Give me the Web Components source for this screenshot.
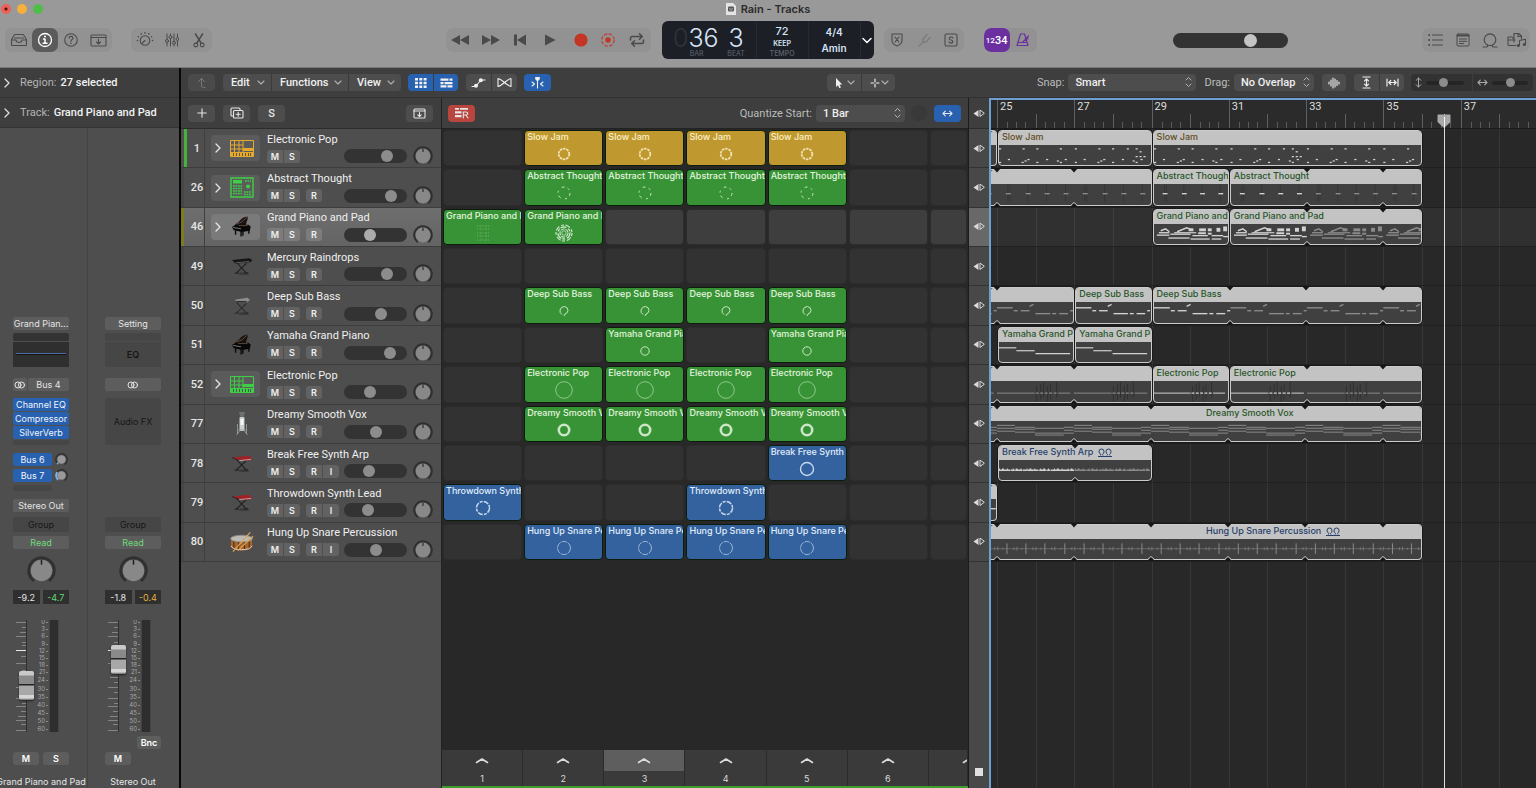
<!DOCTYPE html>
<html lang="en">
<head>
<meta charset="utf-8">
<title>Rain - Tracks</title>
<style>
  html, body { margin: 0; height: 100%; }
  body { background: #282828; font-family: Inter, "Liberation Sans", sans-serif; color: #e6e6e6; overflow: hidden; --ui: Roboto, "Liberation Sans", sans-serif; }
</style>
</head>
<body>
<daw-window></daw-window>
<script>
const RESET = `
  *, *::before, *::after { box-sizing: border-box; }
  button, input, select { font: inherit; color: inherit; margin: 0; padding: 0; border: 0; background: none; outline: 0; }
  button { display: flex; align-items: center; justify-content: center; }
  svg { display: block; flex: none; }
`;
function define(name, css, render) {
  customElements.define(name, class extends HTMLElement {
    connectedCallback() {
      if (this.shadowRoot) return;
      const root = this.attachShadow({ mode: 'open' });
      root.innerHTML = `<style>${RESET}${css}</style>${render(this)}`;
    }
  });
}

/* ---------- icons ---------- */
const s = (w, h, body, sw = 1.2) => `<svg width="${w}" height="${h}" viewBox="0 0 ${w} ${h}" fill="none" stroke="currentColor" stroke-width="${sw}" stroke-linecap="round" stroke-linejoin="round" aria-hidden="true">${body}</svg>`;
const F = 'fill="currentColor" stroke="none"';
const rays = (cx, cy, r, n, from, step) => Array.from({ length: n }, (_, i) => {
  const a = (from + i * step) * Math.PI / 180;
  return `<circle cx="${(cx + r * Math.cos(a)).toFixed(1)}" cy="${(cy + r * Math.sin(a)).toFixed(1)}" r=".8" ${F}/>`;
}).join('');
const ICONS = {
  library: s(18, 14, '<path d="M1.5 6.5 4 2.5Q4.5 1.5 5.5 1.5h7q1 0 1.5 1l2.500 4v5q0 1-1 1h-13q-1 0-1-1zM1.500 7H6q.3 2.500 3 2.500T12 7h4.500M4.500 5h9"/>', 1.1),
  info: s(16, 16, '<circle cx="8" cy="8" r="6.500"/><path d="M6.500 7H8v4M6 11.300h4" stroke-width="1.500"/><circle cx="8" cy="4.500" r="1" fill="currentColor" stroke="none"/>', 1.3),
  help: s(16, 16, '<circle cx="8" cy="8" r="6.300"/><path d="M6 6.300q.1-1.900 2-1.900t2 1.700q0 1-1.200 1.700Q8 8.300 8 9.200"/><circle cx="8" cy="11.300" r=".8" fill="currentColor" stroke="none"/>', 1.1),
  boxdown: s(17, 13, '<rect x="1" y="1" width="15" height="11" rx="1"/><path d="M1 3.500h15M8.500 5.200v4.600M6.500 8l2 2 2-2"/>', 1.1),
  tray: s(13, 11, '<rect x="1" y="1" width="11" height="9" rx="1"/><path d="M1 3h11M6.500 4.500v3.800M4.800 6.800l1.700 1.700 1.700-1.700"/>', 1.1),
  dial: s(18, 16, `<circle cx="9" cy="8.500" r="4.800"/><path d="M9 8.500 6.300 11"/>${rays(9, 8.5, 7.6, 7, 180, 30)}`, 1.1),
  mixer: s(14, 14, '<path d="M2 1v5M2 10v3M5.500 1v1.500M5.500 6v7M9 1v7M9 11.500v1.500M12.500 1v3M12.500 8v5" /><circle cx="2" cy="8" r="1.500"/><circle cx="5.500" cy="4.200" r="1.500"/><circle cx="9" cy="9.700" r="1.500"/><circle cx="12.500" cy="6" r="1.500"/>', 1),
  scissors: s(12, 15, '<path d="M2.500 1 8.300 10.300M9.500 1 3.700 10.300" stroke-width="1.500"/><circle cx="2.800" cy="12" r="1.900"/><circle cx="9.200" cy="12" r="1.900"/>', 1.1),
  rew: s(20, 12, `<path d="M10 1v10L1 6zM19 1v10l-9-5z" ${F}/>`),
  fwd: s(20, 12, `<path d="M10 1v10l9-5zM1 1v10l9-5z" ${F}/>`),
  start: s(14, 12, `<path d="M1 .5h3v11H1zM13 .5v11L4 6z" ${F}/>`),
  play: s(12, 12, `<path d="M1 0.500v11l10.500-5.500z" ${F}/>`),
  record: s(14, 14, '<circle cx="7" cy="7" r="6.600" fill="#c43524" stroke="none"/>'),
  capture: s(14, 14, '<circle cx="7" cy="7" r="6.200" stroke="#bf3a2c" stroke-dasharray="3.300 1.570" stroke-linecap="butt"/><circle cx="7" cy="7" r="2.700" fill="#c43524" stroke="none"/>'),
  cycle: s(16, 14, '<path d="M1.500 7V5.500q0-2 2-2H13M10.500.8 13.300 3.500 10.500 6.200M14.500 7v1.500q0 2-2 2H3M5.500 7.800 2.700 10.500l2.800 2.700"/>', 1.5),
  shield: s(12, 14, '<path d="M1 1h10v7q0 3-5 5-5-2-5-5zM4 4l4 5M8 4 4 9"/>', 1.1),
  tuner: s(13, 14, '<path d="M1 13 5.500 8.500M5.500 8.500Q4 7 5.500 5.500L9 1.500M5.500 8.500Q7 10 8.500 8.500L12 4.500"/>', 1.4),
  solo: s(14, 14, '<rect x="1" y="1" width="12" height="12" rx="1.500"/><path d="M9 5Q8.500 4 7 4 5.200 4 5.200 5.400 5.200 6.600 7 7q1.900.4 1.900 1.700T7 10.100Q5.300 10.100 5 8.900"/>', 1.1),
  metronome: s(14, 14, '<path d="M4.500 1h4L12 12.500H1zM2 9.500h9M6.500 9.500 12.500 3M9.500 5l2.500 1"/>', 1.2),
  list: s(15, 14, `<path d="M4.500 2h10M4.500 7h10M4.500 12h10"/><circle cx="1.200" cy="2" r="1" ${F}/><circle cx="1.200" cy="7" r="1" ${F}/><circle cx="1.200" cy="12" r="1" ${F}/>`, 1.1),
  note: s(14, 14, '<rect x="1" y="1" width="12" height="12" rx="1"/><path d="M1.500 2.500h11" stroke-width="2"/><path d="M3.500 6h7M3.500 8.300h7M3.500 10.500h4"/>', 1),
  loop: s(16, 15, '<circle cx="8" cy="6.700" r="5.800"/><path d="M1 14h3.500q1.500 0 1-1.800M15 14h-3.500q-1.500 0-1-1.800"/>', 1.2),
  media: s(20, 16, `<path d="M9 13.500H2q-1 0-1-1V5h4l1 1.500M1 8h7M7 10V1.500h4.500L14.500 4v3M11 1.500V4.500h3.500"/><path d="M12.500 13.500V8.500l6-1.200v5"/><circle cx="11.300" cy="13.500" r="1.500" ${F}/><circle cx="17.300" cy="12.500" r="1.500" ${F}/>`, 1.1),
  up: s(9, 12, '<path d="M4.500 9V1.500M1.500 4.500l3-3 3 3M4.500 9q0 1.500 2 1.500H8"/>', 1),
  chev: s(8, 5, '<path d="M1 1l3 3 3-3"/>', 1.1),
  lcdchev: s(10, 7, '<path d="M1 1.500l4 4 4-4"/>', 1.5),
  gridi: s(12, 12, `<path d="M0 1h3v2.500H0zM4.300 1h3v2.500h-3zM8.600 1h3v2.500h-3zM0 4.700h3v2.500H0zM4.300 4.700h3v2.500h-3zM8.600 4.700h3v2.500h-3zM0 8.400h3v2.500H0zM4.300 8.400h3v2.500h-3zM8.600 8.400h3v2.500h-3z" ${F}/>`),
  bricks: s(13, 12, `<path d="M0.500 1.500h8v2.300h-8zM9.500 1.500h3v2.300h-3zM0.500 4.900h3v2.300h-3zM4.500 4.900h8v2.300h-8zM0.500 8.300h6v2.300h-6zM7.500 8.300h5v2.300h-5z" ${F}/>`),
  auto: s(15, 12, `<path d="M1 9.500h3.500L10 3h4"/><circle cx="5" cy="8.800" r="2" ${F}/><circle cx="9.800" cy="3.200" r="2" ${F}/>`, 1.1),
  flex: s(15, 11, '<path d="M1 1.500v8q2.500-.5 6.500-4-4-3.500-6.500-4zM14 1.500v8q-2.500-.5-6.500-4 4-3.500 6.500-4z"/>', 1.1),
  catchp: s(13, 13, `<path d="M4.200 1h4.600v2.300L6.500 5.500 4.200 3.300z" ${F}/><path d="M6.500 4v8M1 6l2.500 2L1 10M12 6 9.500 8l2.500 2"/>`, 1.1),
  pointer: s(8, 12, `<path d="M1 1v9l2-1.800 1.300 3 1.600-.7L4.600 7.600H7.300z" ${F}/>`),
  marquee: s(10, 10, '<path d="M5 1v2.700M5 6.300V9M1 5h2.700M6.300 5H9"/>', 1.2),
  updown: s(7, 12, '<path d="M1 4l2.500-2.500L6 4M1 8l2.500 2.500L6 8"/>', 1),
  wave: s(12, 12, '<path d="M1 5v2M3 3v6M5 1v10M7 2v8M9 3.500v5M11 5v2"/>', 1.1),
  vzoom: s(9, 13, '<path d="M1 1h7M1 12h7M4.500 3v7M2.500 4.800l2-2 2 2M2.500 8.200l2 2 2-2"/>', 1.2),
  hzoom: s(13, 9, '<path d="M1 1v7M12 1v7M3 4.500h7M4.800 2.500l-2 2 2 2M8.200 2.500l2 2-2 2"/>', 1.2),
  varrow: s(7, 11, '<path d="M3.500 1v9M1.200 3.300 3.500 1l2.300 2.300M1.200 7.700 3.500 10l2.300-2.300"/>', 1),
  harrow: s(11, 7, '<path d="M1 3.500h9M3.300 1.200 1 3.500l2.300 2.300M7.700 1.200 10 3.500 7.700 5.800"/>', 1.1),
  plus: s(10, 10, '<path d="M5 .8v8.400M.8 5h8.400"/>', 1.1),
  dup: s(14, 12, '<path d="M3 9H2Q1 9 1 8V2q0-1 1-1h7q1 0 1 1v1"/><rect x="3.500" y="3.500" width="9.500" height="7.500" rx="1"/><path d="M8.200 5.200v4M6.200 7.200h4"/>', 1.1),
  recenable: s(14, 12, `<path d="M0 1h4v1.800H0zM5 1h8v1.800H5zM0 4.200h6.500v2.300H0zM0 8h6.500v2.300H0z" ${F}/><path d="M8.300 11V5H11q1.700 0 1.700 1.500T11 8H8.300M10.800 8l2.200 3" />`, 1.1),
  scene: s(14, 7, '<path d="M1.500 5.500 7 2l5.500 3.500"/>', 1.6),
  cellarrows: s(12, 9, `<path d="M5.500 1v7L.5 4.500z" ${F}/><path d="M7 1.500v6l4-3z"/>`, 1),
  chevr: s(6, 10, '<path d="M1 1l4 4-4 4"/>', 1.3),
  stereo: s(12, 8, '<circle cx="4" cy="4" r="3"/><circle cx="7.500" cy="4" r="3"/>', 1),
  doc: '<svg width="10" height="12" viewBox="0 0 10 12" aria-hidden="true"><path d="M0 0h7l3 3v9H0z" fill="#e4e4e4"/><rect x="2" y="3.500" width="6" height="5" rx="1" fill="#555"/><path d="M3.300 5.500h1M5.700 5.500h1M3.500 7h3" stroke="#ddd" stroke-width=".7"/></svg>',
};

/* ---------- instrument pictures ---------- */
const synthRack = c => `<svg width="24" height="17" viewBox="0 0 24 17"><path d="M.5.5h23v16H.5z" fill="none" stroke="${c}"/><path d="M1 5h12M1 9h12M4.500 1v11M9 1v11M13 1v11" stroke="${c}"/><path d="M13 8h10v3H13zM1 12h22v4H1z" fill="${c}"/><path d="M3.500 13v3M6.500 13v3M9.500 13v3M12.500 13v3M15.500 13v3M18.500 13v3M20.500 13v3" stroke="#444" stroke-width=".8"/></svg>`;
const stand = (top, leg) => `<svg width="22" height="20" viewBox="0 0 24 22"><ellipse cx="14" cy="19.500" rx="6" ry="1.500" fill="#000" opacity=".25"/><path d="M6 7 16.500 18.500M17 8 6 18.500M4 18.800h4M14.500 18.500h4" stroke="${leg}" stroke-width="1.300" fill="none"/>${top}</svg>`;
const PICS = {
  rackY: synthRack('#e5a92e'),
  rackG: synthRack('#3fcf46'),
  drumG: '<svg width="24" height="21" viewBox="0 0 24 21"><path d="M1 1h22v19H1z" fill="none" stroke="#3fcf46" stroke-width="1.400"/><path d="M3 3h9v3.500H3z" fill="#3fcf46"/><path d="M3 9h9M3 11.500h9M3 14h9M3 16.500h9M14 15h7M14 17.500h7M15 4h6" stroke="#3fcf46" stroke-width="1.500" stroke-dasharray="1.800 .7"/><circle cx="18" cy="9.500" r="2" fill="#3fcf46"/></svg>',
  piano: '<svg width="22" height="23" viewBox="0 0 24 24"><path d="M4 10Q9 7 11 4q3-3 7-3 1 3-1 6l-1 4z" fill="#191310"/><path d="M6 9.500Q12 8 17.500 2" stroke="#80614d" fill="none" stroke-width=".8"/><path d="M1 12.500 5 10h14l2.500 2-1 4.500L12 18l-9-2z" fill="#080808"/><path d="M2 13l9 1.500" stroke="#999" stroke-width=".8"/><path d="M5 16v5M11 17v6M13 17v5M19.500 15v5" stroke="#0a0a0a" stroke-width="1.500"/><path d="M8 11h10" stroke="#7a5d4a" stroke-width=".8"/></svg>',
  synthDark: stand('<path d="M1 4.500 20 2.500l3.500 2L21 7 5 8.500z" fill="#151515"/><path d="M5 7.500 20 6" stroke="#888" stroke-width=".7"/>', '#242424'),
  synthGrey: stand('<path d="M4 4 18 2l3 2.500L17 7 6 6z" fill="#8c908e"/><path d="M6 6h11" stroke="#222"/>', '#30302f'),
  synthRed: stand('<path d="M1 5 20 3l3 3-2 2.500L9 8z" fill="#a02226"/><path d="M8 8.500 22 7" stroke="#ccc" stroke-width=".8"/><path d="M1 5l8 3.500" stroke="#222"/>', '#222'),
  mic: '<svg width="14" height="26" viewBox="0 0 14 26"><path d="M4 1h6L8.500 6h-3z" fill="#6b7171"/><rect x="4.500" y="6" width="5" height="14" rx="1" fill="#c9d2d1"/><path d="M5.500 8h3v6h-3z" fill="#f5f8f7"/><path d="M2.500 13v10M11.500 13v10M2.500 19h9M4.500 20l-3 4M9.500 20l3 4" stroke="#9aa4a3" stroke-width=".8"/></svg>',
  snare: '<svg width="25" height="22" viewBox="0 0 26 22"><path d="M1 7h22v9q-2 4-11 4T1 16z" fill="#a8652c"/><path d="M4 10v8M9 11v8M15 11v8M20 10v8" stroke="#4b2d15" stroke-width="1.100"/><ellipse cx="12" cy="7.500" rx="11.300" ry="3.500" fill="#bcbab5" stroke="#8d8a84"/><path d="M1 15q2 4 11 4t11-4" stroke="#ddd6c8" fill="none"/><path d="M3 21 21 1M8 20 24 5" stroke="#dba658" stroke-width="1.200"/></svg>',
};

/* ---------- data ---------- */
const TRACKS = [
  { n: 1, name: 'Electronic Pop', pic: 'rackY', folder: 1, btn: 'MS', vol: 74 },
  { n: 26, name: 'Abstract Thought', pic: 'drumG', folder: 1, btn: 'MSR', vol: 83 },
  { n: 46, name: 'Grand Piano and Pad', pic: 'piano', folder: 1, btn: 'MSR', vol: 39, sel: 1 },
  { n: 49, name: 'Mercury Raindrops', pic: 'synthDark', btn: 'MSR', vol: 74 },
  { n: 50, name: 'Deep Sub Bass', pic: 'synthGrey', btn: 'MSR', vol: 61 },
  { n: 51, name: 'Yamaha Grand Piano', pic: 'piano', btn: 'MSR', vol: 81 },
  { n: 52, name: 'Electronic Pop', pic: 'rackG', folder: 1, btn: 'MSR', vol: 38 },
  { n: 77, name: 'Dreamy Smooth Vox', pic: 'mic', btn: 'MSR', vol: 50 },
  { n: 78, name: 'Break Free Synth Arp', pic: 'synthRed', btn: 'MSRI', vol: 37 },
  { n: 79, name: 'Throwdown Synth Lead', pic: 'synthRed', btn: 'MSRI', vol: 33 },
  { n: 80, name: 'Hung Up Snare Percussion', pic: 'snare', btn: 'MSRI', vol: 52 },
];
const LOOPS = [
  { cols: [2, 3, 4, 5], name: 'Slow Jam', c: 'y', ring: 'beads' },
  { cols: [2, 3, 4, 5], name: 'Abstract Thought', c: 'g', ring: 'ticks' },
  { cols: [1, 2], name: 'Grand Piano and Pad', c: 'g', ring: 'swirl' },
  { cols: [] },
  { cols: [2, 3, 4, 5], name: 'Deep Sub Bass', c: 'g', ring: 'drop' },
  { cols: [3, 5], name: 'Yamaha Grand Piano', c: 'g', ring: 'small' },
  { cols: [2, 3, 4, 5], name: 'Electronic Pop', c: 'g', ring: 'large' },
  { cols: [2, 3, 4, 5], name: 'Dreamy Smooth Vox', c: 'g', ring: 'thick' },
  { cols: [5], name: 'Break Free Synth Arp', c: 'b', ring: 'solid' },
  { cols: [1, 4], name: 'Throwdown Synth Lead', c: 'b', ring: 'dashed' },
  { cols: [2, 3, 4, 5], name: 'Hung Up Snare Percussion', c: 'b', ring: 'fine' },
];
/* regions: from / to are bar numbers; 24 stands for the part scrolled off to the left */
const REGIONS = [
  [{ from: 24, to: 25, p: 'dots' }, { from: 25, to: 29, name: 'Slow Jam', c: 'y', p: 'dots', bright: 4 }, { from: 29, to: 36, name: 'Slow Jam', c: 'y', p: 'dots', bright: 8 }],
  [{ from: 24, to: 29, p: 'hits', notch: [25, 27] }, { from: 29, to: 31, name: 'Abstract Thought', c: 'g', p: 'hits', bright: 2 }, { from: 31, to: 36, name: 'Abstract Thought', c: 'g', p: 'hits', bright: 2, notch: [33, 35] }],
  [{ from: 29, to: 31, name: 'Grand Piano and Pad', c: 'g', p: 'piano', bright: 2 }, { from: 31, to: 36, name: 'Grand Piano and Pad', c: 'g', p: 'piano', bright: 2, notch: [33, 35] }],
  [],
  [{ from: 24, to: 27, p: 'bass', notch: [25] }, { from: 27, to: 29, name: 'Deep Sub Bass', c: 'g', p: 'bass', bright: 2 }, { from: 29, to: 36, name: 'Deep Sub Bass', c: 'g', p: 'bass', bright: 2, notch: [31, 33, 35] }],
  [{ from: 25, to: 27, name: 'Yamaha Grand Piano', c: 'g', p: 'steps', bright: 2 }, { from: 27, to: 29, name: 'Yamaha Grand Piano', c: 'g', p: 'steps', bright: 2 }],
  [{ from: 24, to: 29, p: 'pop', notch: [25, 27] }, { from: 29, to: 31, name: 'Electronic Pop', c: 'g', p: 'pop', bright: 2 }, { from: 31, to: 36, name: 'Electronic Pop', c: 'g', p: 'pop', bright: 2, notch: [33, 35] }],
  [{ from: 24, to: 36, name: 'Dreamy Smooth Vox', c: 'g', p: 'chords', mid: 1, notch: [25, 27, 29, 31, 33, 35] }],
  [{ from: 25, to: 29, name: 'Break Free Synth Arp', c: 'b', p: 'noise', bright: 2, st: 1, notch: [27] }],
  [{ from: 24, to: 25, p: 'line', bright: 2 }],
  [{ from: 24, to: 36, name: 'Hung Up Snare Percussion', c: 'b', p: 'spikes', mid: 1, st: 1, notch: [25, 27, 29, 31, 33, 35] }],
];

const RINGS = (() => {
  const r = (rad, w, dash, o = 1) => `<circle cx="12" cy="12" r="${rad}" stroke-width="${w}" opacity="${o}" ${dash ? `stroke-dasharray="${dash}"` : ''}/>`;
  return {
    beads: r(5.3, 1.8, '2.5 .85'), ticks: r(6, 1, '3 3.200 2 4.367'),
    swirl: r(8, 1.2, '3 1.500 5 2') + r(6, 1.3, '6 2 3 1') + r(4, 1.2, '4 1') + r(2.2, .8),
    drop: '<path d="M10 15.500Q7.500 14 8 11q1-3.500 4.500-3.500 3.500.5 3.500 4-.5 3-3 3.500l-1 2"/>',
    small: r(4.2, 1), large: r(8.3, 1, '', .6), thick: r(5.2, 2.6), solid: r(6.5, 1.4),
    dashed: r(6.5, 1.5, '5 1 3 1.200'), fine: r(6.5, 1, '6 .8', .7),
    faint: '<path d="M6 5h13M6 8h13M6 12h13M6 15h13M6 19h13" stroke-dasharray="1 1.500 2 1" opacity=".35"/>',
  };
})();

/* ---------- note drawings inside regions ---------- */
const BAR = 38.64;
function pattern(kind, lead, bars, bright) {
  const P = BAR * 2, total = lead + bars * BAR;
  const H = (x1, x2, y, w = 1.4) => `<path d="M${x1} ${y}H${x2}" stroke-width="${w}"/>`;
  const dot = (x, y) => H(x - 1, x + 1.2, y, 1.3);
  const one = {
    dots: i => [25, 39, 63, 1].map(x => dot(x, 4)).join('') + [10, 30, 49, 68].map(x => dot(x, 15)).join('') + [24, 39, 63, 1, 27, 60].map((x, k) => dot(x, k > 3 ? 16.5 : 18)).join('') + (i % 4 === 1 ? dot(54, 4) + dot(67, 7) + dot(67, 12) + dot(71, 12) + dot(63, 12) : ''),
    hits: () => [9, 29, 48, 67].map((x, k) => `<path d="M${x + 2} 1v17${k ? '' : `M${x + 4} 1v17`}" stroke="#333" stroke-width=".8"/>` + H(x, x + 5, 10)).join(''),
    piano: () => H(5, 16, 9) + H(3, 16, 11.5) + H(17, 38, 10.500) + H(15, 37, 14.500) + H(21, 44, 9, 1.2) + '<path d="M7 7l5-2 4 3M24 8l10-4 6 2" stroke-width="1.500"/>' + H(36, 41, 6, 3) + H(47, 54, 6, 3) + H(56, 60, 6, 3) + H(65, 69, 6, 4) + H(72, 76, 5, 5) + H(46, 54, 9.500, 2) + H(56, 60, 10, 2) + H(40, 56, 12) + H(60, 72, 12) + H(38, 58, 15.500) + H(60, 70, 15.500) + H(72, 77, 13),
    bass: () => H(0, 16, 6) + H(17, 21, 9) + H(24, 33, 9) + '<path d="M33 4.500l4-2" stroke-width="1.400"/>' + H(39, 54, 12) + H(56, 60, 12) + H(63, 72, 12) + H(74, 77, 9),
    steps: () => H(0, 18, 6, 1.2) + H(18, 37, 9, 1.2) + H(38, 74, 12, 1.2),
    pop: () => [40, 44, 47, 51, 54, 60].map((x, k) => `<path d="M${x} ${5 - k % 3 * 2}v16" stroke="#303030" stroke-width="1"/>`).join('') + H(0, 38, 12.500, 1) + '<path d="M39 12.500H62" stroke-dasharray="3 1.500" stroke-width="1.200"/>' + H(62, 74, 12.500, 1),
    chords: () => H(0, 18, 4.500, 1) + H(0, 18, 7.500, 1) + H(0, 18, 10.500, 1) + H(18, 38, 6.500, 1) + H(18, 38, 8.500, 1) + H(18, 38, 11.500, 1) + H(38, 67, 7.500, 1) + H(38, 67, 12.500, 1) + H(38, 67, 14.500, 1) + H(67, 77, 6.500, 1) + H(67, 77, 9.500, 1) + H(67, 77, 12.500, 1),
    noise: () => '<path d="M0 10.500H77" stroke-width="1.600" stroke-dasharray="4 .6 7 .5"/><path d="M0 10H77" stroke-width="2.600" stroke-dasharray="1 2 2 3 1 5"/>',
    line: () => H(60, 77, 10),
    spikes: () => '<path d="M0 10H77" stroke-width=".5"/>' + [10, 29, 48, 68].map(x => `<path d="M${x} 4.500v11" stroke-width="1"/><path d="M${x + 7} 8.500v3M${x + 10} 8v4M${x - 4} 9v2" stroke-width=".7"/>`).join(''),
  }[kind];
  let out = '';
  for (let i = lead ? -1 : 0; i * 2 < bars; i++) {
    out += `<g transform="translate(${(lead + i * P).toFixed(2)} 0)" stroke="${i >= 0 && i * 2 < bright || kind === 'line' ? '#d2d2d2' : '#8b8b8b'}">${one(i)}</g>`;
  }
  return `<svg class="notes" viewBox="0 0 ${total.toFixed(2)} 21" preserveAspectRatio="none" fill="none" aria-hidden="true">${out}</svg>`;
}

/* ---------- small controls ---------- */
define('icon-button', `
  :host { display: block; flex: none; width: var(--w, 27px); height: var(--h, 17px); }
  button { width: 100%; height: 100%; border-radius: inherit; background: var(--bg, transparent); color: var(--fg, inherit); font-family: var(--ui); font-size: 11px; font-weight: 500; }
  :host([menu]) button { justify-content: space-between; padding: 0 6px 0 8px; }
  .m { color: #b0b0b0; }
`, el => `<button type="button" aria-label="${el.getAttribute('label') || ''}">${ICONS[el.getAttribute('icon')] || ''}<slot></slot>${el.hasAttribute('menu') ? `<span class="m">${ICONS.chev}</span>` : ''}</button>`);

define('button-group', `
  :host { display: flex; flex: none; align-items: center; overflow: hidden; border-radius: 4px; background: #4d4d4d; }
  :host([tone="blue"]) { background: #2761b0; }
  :host([tone="red"]) { background: #b8453e; }
  :host([tone="light"]) { background: #929292; border-radius: 7px; height: 24px; color: #4a4a4a; }
  :host([tone="dark"]) { background: #323232; }
  ::slotted(icon-button:not(:first-child)) { border-left: var(--div, 1px solid #3b3b3b); }
  :host([tone="light"]) { --div: 0; --h: 24px; }
`, () => '<slot></slot>');

define('pop-up', `
  :host { display: flex; align-items: center; gap: 4px; font-family: var(--ui); font-size: 11px; flex: none; color: #bcbcbc; }
  span { position: relative; display: block; }
  select { appearance: none; display: block; width: var(--w); height: 17px; border-radius: 4px; background: #4d4d4d; color: #f0f0f0; padding: 0 7px; font-size: 11px; font-weight: 500; }
  svg { position: absolute; right: 4px; top: 2px; color: #b5b5b5; }
`, el => `<label for="s">${el.getAttribute('label')}</label><span><select id="s"><option>${el.getAttribute('value')}</option></select>${ICONS.updown}</span>`);

define('level-slider', `
  :host { display: block; flex: none; width: var(--w, 63px); }
  input { appearance: none; display: block; width: 100%; height: var(--h, 14px); border-radius: 8px; background: var(--track, #333); padding: 0 2px; }
  input::-webkit-slider-thumb { appearance: none; width: var(--t, 12px); height: var(--t, 12px); border-radius: 50%; background: var(--knob, #8c8c8c); }
`, el => `<input type="range" min="0" max="100" value="${el.getAttribute('value')}" aria-label="${el.getAttribute('label') || 'Volume'}">`);

define('pan-knob', `:host { display: block; flex: none; }`, el => {
  const d = +(el.getAttribute('size') || 20), a = el.getAttribute('arc');
  return `<svg width="${d}" height="${d}" viewBox="0 0 20 20" role="img" aria-label="Pan"><circle cx="10" cy="10" r="8.800" fill="none" stroke="#303030" stroke-width="2" pathLength="100" stroke-dasharray="80 20" transform="rotate(126 10 10)"/>${a ? `<circle cx="10" cy="10" r="8.300" fill="none" stroke="#7db3ee" stroke-width="3" pathLength="100" stroke-dasharray="${a} 100" transform="rotate(126 10 10)"/>` : ''}<circle cx="10" cy="10" r="${a ? 6.5 : 7.4}" fill="${a ? '#999' : '#888'}"/>${a ? '' : '<path d="M10 2.500v3.500" stroke="#1c1c1c" stroke-width="1"/>'}</svg>`;
});

/* ---------- header ---------- */
define('lcd-display', `
  :host { display: grid; flex: none; grid-template-columns: 95px 52px 52px 12px; width: 212px; height: 38px; border-radius: 6px; background: #1c1f26; color: #d5e3f7; box-sizing: border-box; padding-right: 1px; }
  .pos { display: grid; grid-template-columns: 57px 35px; border-right: 1px solid #262a31; padding-top: 4px; }
  .pos div, .tempo, .sig { display: flex; flex-direction: column; align-items: center; }
  b { font-weight: 300; font-size: 25px; line-height: 26px; height: 25px; white-space: nowrap; }
  .pos .bar { align-items: flex-end; } .bar small { padding-right: 15px; }
  i { font-style: normal; color: #30343b; }
  small { font-size: 7px; line-height: 8px; color: #5d6571; }
  .tempo, .sig { border-right: 1px solid #262a31; font-size: 11px; font-weight: 500; }
  .tempo { padding-top: 4px; line-height: 13px; } .tempo em { font-style: normal; font-size: 7px; font-weight: 600; line-height: 12px; }
  .sig { padding-top: 3px; line-height: 16px; font-size: 10px; font-weight: 600; }
  button { color: #fff; }
`, () => `<div class="pos"><div class="bar"><b><i>0</i>36</b><small>BAR</small></div><div><b>3</b><small>BEAT</small></div></div>
  <div class="tempo"><span>72</span><em>KEEP</em><small>TEMPO</small></div>
  <div class="sig"><span>4/4</span><span>Amin</span></div>
  <button type="button" aria-label="Display mode">${ICONS.lcdchev}</button>`);

const ib = (icon, w, extra = '', text = '') => `<icon-button icon="${icon}" label="${icon}" style="--w:${w}px;${extra}">${text}</icon-button>`;
define('daw-header', `
  :host { display: block; height: 68px; background: #999; color: #2c2c2c; border-bottom: 1px solid #777; box-sizing: border-box; }
  .title { position: relative; display: flex; align-items: center; justify-content: center; gap: 5px; height: 18px; font-size: 11px; font-weight: 600; }
  .lights { position: absolute; left: 1px; top: 4px; display: flex; gap: 6px; }
  .lights button { width: 10px; height: 10px; border-radius: 50%; }
  .bar { display: flex; align-items: center; height: 44px; padding: 0 6px 0 5px; }
`, () => `<div class="title"><div class="lights"><button aria-label="Close" style="background:radial-gradient(circle,#501010 1px,#ee5f57 2px)"></button><button aria-label="Minimise" style="background:#f6b03c"></button><button aria-label="Zoom" style="background:#4fbd48"></button></div>${ICONS.doc}<span>Rain - Tracks</span></div>
  <div class="bar">
    <button-group tone="light">${ib('library', 27)}${ib('info', 26, '--bg:#5b5b5b;--fg:#fff;border-radius:7px')}${ib('help', 26)}${ib('boxdown', 28)}</button-group>
    <button-group tone="light" style="margin-left:19px">${ib('dial', 28)}${ib('mixer', 26)}${ib('scissors', 27)}</button-group>
    <div style="flex:235"></div>
    <button-group tone="light">${ib('rew', 28)}${ib('fwd', 34)}${ib('start', 24)}${ib('play', 36)}${ib('record', 26)}${ib('capture', 29)}${ib('cycle', 28)}</button-group>
    <lcd-display style="margin-left:11px"></lcd-display>
    <button-group tone="light" style="margin-left:10px">${ib('shield', 27)}${ib('tuner', 27, '--fg:#7b7b7b')}${ib('solo', 26)}</button-group>
    <button-group tone="light" style="margin-left:20px"><icon-button label="Count in" style="--w:26px;--bg:#6b2fa0;--fg:#fff;border-radius:7px"><span style="font-size:8px">12</span><span>34</span></icon-button>${ib('metronome', 27, '--fg:#6b2fa0')}</button-group>
    <div style="flex:137"></div>
    <level-slider value="71" label="Master volume" style="--w:115px;--h:15px;--t:13px;--track:#333;--knob:#c4c4c4"></level-slider>
    <div style="flex:135"></div>
    <button-group tone="light">${ib('list', 27)}${ib('note', 28)}${ib('loop', 26)}${ib('media', 27)}</button-group>
  </div>`);

/* ---------- inspector ---------- */
const SCALE = ['0', '3', '6', '9', '12', '15', '18', '21', '24', '30', '35', '40', '45', '50', '60'];
const YS = [2, 9, 16, 24, 31, 38, 45, 52, 60, 69, 77, 85, 93, 101, 109];
const TICKS = [[2, 10], [7, 4], [12, 6], [16, 10], [22, 4], [25, 4], [30, 10], [36, 5], [43, 10], [50, 4], [57, 8], [62, 4], [67, 10], [72, 4], [78, 10], [83, 4], [86, 10], [91, 5], [96, 8], [100, 10], [104, 5], [110, 10]];
define('fader-meter', `
  :host { display: block; }
  .f { display: grid; grid-template-columns: 10px 3px 20px 10px; height: 112px; position: relative; padding-left: 3px; }
  input { appearance: none; writing-mode: vertical-lr; direction: rtl; position: absolute; left: 5px; top: 0; width: 17px; height: 112px; background: linear-gradient(90deg, transparent 8px, #2e2e2e 8px, #2e2e2e 9px, transparent 9px); }
  input::-webkit-slider-thumb { appearance: none; width: 15px; height: 29px; border-radius: 2px; border: 0; background: linear-gradient(#c9c9c9 0 4px, #8a8a8a 5px 13px, #222 13px 14px, #a8a8a8 15px 24px, #d5d5d5 24px 27px, #666); box-shadow: 0 1px 2px #222; }
  .meter { grid-column: 4; background: #2e2e2e; width: 10px; height: 112px; border: 1px solid #444; border-width: 0 1px; }
`, el => `<div class="f"><svg width="10" height="112">${TICKS.map(([y, l], i) => `<path d="M${10 - l} ${y + .5}H10" stroke="${i === 6 ? '#e8e8e8' : '#858585'}"/>`).join('')}</svg>
  <svg width="20" height="112" style="grid-column:3" font-family="Inter, sans-serif">${SCALE.map((t, i) => `<text x="16" y="${YS[i] + 2}" font-size="6" text-anchor="end" fill="#a8a8a8">${t}</text><path d="M17 ${YS[i]}.500h2" stroke="#8a8a8a"/>`).join('')}</svg>
  <div class="meter"></div>
  <input type="range" min="0" max="100" value="${el.getAttribute('value')}" aria-label="Channel volume"></div>`);

define('channel-strip', `
  :host { display: grid; grid-template-columns: 56px; align-items: start; align-content: end; box-sizing: border-box;
    grid-template-rows: 16px 9px 36px 20px 55px 46px 18px 19px 20px 34px 30px 116px 16px 24px 12px; font-size: 9px; height: 100%; }
  :host > * { min-width: 0; }
  button, .slot { width: 100%; height: 13px; border-radius: 2px; background: #5d5d5d; color: #e4e4e4; display: flex; align-items: center; justify-content: center; white-space: nowrap; overflow: hidden; }
  .dim { background: #464646; color: #161616; }
  .blue { background: #2761b0; color: #f1f5fb; }
  .read { color: #6fdc79; }
  .row { display: flex; gap: 3px; } .row > * { flex: 1; }
  .val { background: #2f2f2f; height: 14px; font-size: 9px; border-radius: 0; }
  .big { font-size: 9px; font-weight: 600; color: #fff; height: 13px; border-radius: 3px; }
  .name { display: flex; justify-content: center; white-space: nowrap; line-height: 12px; }
`, el => {
  const a = el.hasAttribute('main');
  return `<button>${a ? 'Grand Pian...' : 'Setting'}</button>
  <div class="slot dim" style="height:8px;${a ? 'background:#333' : ''}"></div>
  ${a ? '<div style="height:25px;background:#2f2f2f"><svg width="56" height="25"><path d="M3 11.500h50" stroke="#4c6ea8"/><path d="M3 12.500h50" stroke="#111"/></svg></div>' : '<div class="slot dim" style="height:25px;font-weight:600">EQ</div>'}
  ${a ? `<div class="row" style="gap:1px"><button style="flex:0 0 14px" aria-label="Stereo">${ICONS.stereo}</button><button>Bus 4</button></div>` : `<button aria-label="Stereo">${ICONS.stereo}</button>`}
  ${a ? '<div style="display:grid;gap:1px;width:100%"><button class="blue">Channel EQ</button><button class="blue">Compressor</button><button class="blue">SilverVerb</button><div class="slot dim" style="height:5px"></div></div>' : '<div class="slot dim" style="height:47px">Audio FX</div>'}
  ${a ? '<div style="display:grid;gap:3px;grid-template-columns:39px 13px;column-gap:3px;width:100%"><button class="blue">Bus 6</button><pan-knob size="13" arc="5"></pan-knob><button class="blue">Bus 7</button><pan-knob size="13" arc="25"></pan-knob><div class="slot dim" style="height:6px"></div></div>' : '<div></div>'}
  ${a ? '<button>Stereo Out</button>' : '<div></div>'}
  <div class="slot dim" style="height:15px">Group</div>
  <button class="read">Read</button>
  <div style="display:flex;justify-content:center"><pan-knob size="29"></pan-knob></div>
  <div class="row"><div class="slot val">${a ? '-9.2' : '-1.8'}</div><div class="slot val" style="color:${a ? '#62d873' : '#e0b13a'}">${a ? '-4.7' : '-0.4'}</div></div>
  <fader-meter value="${a ? 38 : 70}"></fader-meter>
  ${a ? '<div></div>' : '<div style="display:flex;justify-content:flex-end"><button class="big" style="width:24px">Bnc</button></div>'}
  <div class="row" style="gap:4px"><button class="big">M</button>${a ? '<button class="big">S</button>' : '<div></div>'}</div>
  <div class="name">${a ? 'Grand Piano and Pad' : 'Stereo Out'}</div>`;
});

define('inspector-panel', `
  :host { display: grid; grid-template-rows: 30px 30px minmax(0, 1fr); background: #4e4e4e; border-right: 2px solid #080808; overflow: hidden; font-size: 11px; }
  .h { display: flex; align-items: center; gap: 4px; padding-left: 4px; background: #3e3e3e; color: #b4b4b4; border-bottom: 1px solid #333; font-family: var(--ui); }
  .h b { font-weight: 500; color: #f2f2f2; }
  .h svg { margin-right: 6px; color: #ddd; }
  .strips { display: grid; grid-template-columns: 88px 1fr; min-height: 0; }
  .strips > :first-child { padding-left: 13px; border-right: 1px solid #434343; }
  .strips > :last-child { padding-left: 17px; }
`, () => `<div class="h">${ICONS.chevr}Region: <b>27 selected</b></div><div class="h">${ICONS.chevr}Track: <b>Grand Piano and Pad</b></div>
  <div class="strips"><channel-strip main></channel-strip><channel-strip></channel-strip></div>`);

/* ---------- track list ---------- */
define('track-row', `
  :host { display: grid; grid-template-columns: 24px 6px 49px 7px 1fr; background: #4e4e4e; border-bottom: 1px solid #3d3d3d; box-sizing: border-box; min-height: 0; box-shadow: inset 3px 0 0 #474747; }
  :host([selected]) { background: linear-gradient(#6e6e6e, #646464); box-shadow: inset 3px 0 0 #7d7a20; --knob: #ababab; }
  :host([playing]) { box-shadow: inset 0 0 0 #000; }
  .n { display: flex; align-items: center; justify-content: center; padding-left: 9px; border-right: 1px solid #3f3f3f; font-family: var(--ui); font-size: 11px; font-weight: 500; }
  :host([playing]) .n { background: linear-gradient(90deg, transparent 3px, #46b13c 3px, #46b13c 6px, transparent 6px); }
  .pic { grid-column: 3; align-self: center; display: grid; grid-template-columns: 12px 30px; column-gap: 3px; align-items: center; justify-items: center; height: 26px; padding-left: 1px; border-radius: 4px; }
  .folder { background: #5b5b5b; } :host([selected]) .folder { background: #7a7a7a; }
  .main { grid-column: 5; display: grid; grid-template-rows: 17px 16px; align-items: center; align-content: center; padding-bottom: 1px; min-width: 0; }
  .name { font-family: var(--ui); font-size: 11px; line-height: 16px; white-space: nowrap; color: #f0f0f0; }
  .ctl { display: grid; grid-template-columns: 77px 63px 1fr; align-items: center; }
  .ms { display: flex; gap: 6px; } .ms div { display: flex; gap: 1px; border-radius: 3px; overflow: hidden; }
  .ms button { width: 16px; height: 13px; background: #626262; font-size: 9px; font-weight: 600; color: #f0f0f0; }
  :host([selected]) .ms button { background: #7c7c7c; }
  pan-knob { margin-left: 6px; }
`, el => {
  const t = TRACKS[+el.getAttribute('index')];
  const b = c => `<button type="button">${c}</button>`;
  return `<div class="n">${t.n}</div><div class="pic${t.folder ? ' folder' : ''}">${t.folder ? ICONS.chevr : '<span></span>'}${PICS[t.pic]}</div>
  <div class="main"><div class="name">${t.name}</div><div class="ctl"><div class="ms"><div>${b('M')}${b('S')}</div>${t.btn[2] ? `<div>${[...t.btn.slice(2)].map(b).join('')}</div>` : ''}</div><level-slider value="${t.vol}" label="${t.name} volume"></level-slider><pan-knob></pan-knob></div></div>`;
});

define('track-list', `
  :host { display: grid; grid-template-rows: 30px var(--tracks) 1fr; background: #4e4e4e; border-right: 1px solid #222; min-height: 0; }
  .h { display: flex; align-items: center; gap: 8px; padding: 0 8px 0 7px; background: #3e3e3e; }
  .rows { display: grid; grid-template-rows: repeat(11, minmax(0, 1fr)); border-top: 1px solid #2c2c2c; }
`, () => `<div class="h"><button-group>${ib('plus', 27)}</button-group><button-group>${ib('dup', 27)}</button-group><button-group><icon-button label="Solo">S</icon-button></button-group><span style="flex:1"></span><button-group>${ib('tray', 27)}</button-group></div>
  <div class="rows">${TRACKS.map((t, i) => `<track-row index="${i}" ${t.sel ? 'selected' : ''} ${i ? '' : 'playing'}></track-row>`).join('')}</div>`);

/* ---------- live loops ---------- */
define('loop-cell', `
  :host { display: block; margin: 1px 1px 2px 1px; border-radius: 4px; background: #323232; overflow: hidden; min-width: 0; box-sizing: border-box; border: 1px solid #2c2c2c; }
  :host([lit]) { background: #3e3e3e; }
  :host([tone]) { border-color: #0c1c0c; color: #e4f5df; }
  :host([tone="y"]) { background: #bf9930; color: #fbf0c9; } :host([tone="g"]) { background: #389337; } :host([tone="b"]) { background: #33629f; color: #e2edfa; }
  .t { font-size: 9px; font-weight: 500; line-height: 11px; padding-left: 2px; white-space: nowrap; overflow: hidden; height: 11px; }
  svg { margin: 0 auto; opacity: .85; }
`, el => el.getAttribute('name') ? `<div class="t">${el.getAttribute('name')}</div><svg width="24" height="24" viewBox="0 0 24 24" fill="none" stroke="currentColor">${RINGS[el.getAttribute('ring')]}</svg>` : '');

define('loop-grid', `
  :host { display: grid; grid-template-rows: 30px var(--tracks) minmax(0, 1fr) 36px 2px; background: #282828; min-width: 0; overflow: hidden; }
  .h { display: flex; align-items: center; padding: 0 7px 0 6px; background: #3e3e3e; }
  .cells { display: grid; grid-template: repeat(11, minmax(0, 1fr)) / repeat(6, minmax(0, 1fr)) 39px; border-top: 1px solid #222; }
  .scenes { grid-row: 4; display: grid; grid-template-columns: repeat(6, minmax(0, 1fr)) 39px; background: #3a3a3a; }
  .scenes button { flex-direction: column; justify-content: flex-start; border-right: 1px solid #2b2b2b; font-size: 9px; color: #dcdcdc; height: 36px; min-width: 0; overflow: hidden; }
  .tri { display: flex; align-items: center; justify-content: center; height: 21px; width: 100%; }
  .tri.part { justify-content: flex-end; }
  .tri.part svg { margin-right: -9px; }
  .on .tri { background: #5e5e5e; }
  .num { line-height: 15px; }
  .end { grid-row: 5; background: #3f9c2f; }
  .dot { width: 16px; height: 16px; border-radius: 50%; background: #393939; margin: 0 7px 0 6px; }
`, () => `<div class="h"><button-group tone="red">${ib('recenable', 27)}</button-group><span style="flex:1"></span><pop-up label="Quantize Start:" value="1 Bar" style="--w:89px"></pop-up><span class="dot"></span><button-group tone="blue">${ib('harrow', 27)}</button-group></div>
  <div class="cells">${LOOPS.map((l, r) => [1, 2, 3, 4, 5, 6, 7].map(c => l.cols.includes(c) ? `<loop-cell tone="${l.c}" name="${l.name}" ring="${r === 2 && c === 1 ? 'faint' : l.ring}"></loop-cell>` : `<loop-cell ${r === 2 ? 'lit' : ''}></loop-cell>`).join('')).join('')}</div>
  <div class="scenes">${[1, 2, 3, 4, 5, 6, ''].map(n => `<button type="button" aria-label="Scene ${n || 7}" class="${n === 3 ? 'on' : ''}"><span class="tri ${n ? '' : 'part'}">${ICONS.scene}</span><span class="num">${n}</span></button>`).join('')}</div><div class="end"></div>`);

define('divider-column', `
  :host { display: grid; grid-template-rows: 30px var(--tracks) minmax(0, 1fr) 32px; background: #484848; border-left: 1px solid #1c1c1c; color: #dadada; }
  .rows { display: grid; grid-template-rows: repeat(11, minmax(0, 1fr)); border-top: 1px solid #2c2c2c; }
  button { width: 100%; border-bottom: 1px solid #333; } .top { background: #3e3e3e; border: 0; height: 30px; }
  .sel { background: #686868; }
  .stop { grid-row: 4; border: 0; height: 32px; } .stop i { width: 8px; height: 8px; background: #e0e0e0; }
`, () => `<button class="top" aria-label="All tracks">${ICONS.cellarrows}</button><div class="rows">${TRACKS.map(t => `<button aria-label="${t.name} source" class="${t.sel ? 'sel' : ''}">${ICONS.cellarrows}</button>`).join('')}</div><button class="stop" aria-label="Stop all"><i></i></button>`);

/* ---------- arrangement ---------- */
define('region-clip', `
  :host { display: grid; grid-template-rows: 14px 1fr; position: relative; margin: 1px 0 1px 1px; border-radius: 4px; border: 1px solid #cbcbcb; background: #404040; box-sizing: border-box; min-width: 0; min-height: 0; box-shadow: 0 0 0 1px #1a1a1a; }
  :host([open]) { border-left: 0; border-top-left-radius: 0; border-bottom-left-radius: 0; margin-left: 0; }
  .t { background: #c3c3c3; font-size: 9px; font-weight: 500; line-height: 12px; padding-left: 3px; white-space: nowrap; overflow: hidden; display: flex; gap: 5px; border-radius: 2px 2px 0 0; }
  .t.mid { padding-left: 50%; }
  .y { color: #5f4c1d; } .g { color: #275528; } .b { color: #263f6b; }
  .notes { width: 100%; height: 100%; overflow: hidden; min-height: 0; }
  .body { min-height: 0; overflow: hidden; }
  .n { position: absolute; width: 8px; height: 5px; margin-left: -4px; }
  .n.top { top: -2px; } .n.bot { bottom: -2px; }
`, el => {
  const r = REGIONS[+el.getAttribute('lane')][+el.getAttribute('index')];
  const open = r.from === 24, lead = open ? 6 : 0, bars = r.to - (open ? 25 : r.from);
  const notches = (r.notch || []).map(b => {
    const left = open ? `calc(6px + (100% - 6px) * ${b - 25} / ${bars})` : `calc(100% * ${b - r.from} / ${bars})`;
    return `<svg class="n top" style="left:${left}" viewBox="0 0 8 5"><path d="M0 0h8L4 4.500z" fill="#161616"/></svg><svg class="n bot" style="left:${left}" viewBox="0 0 8 5"><path d="M0 5 4 .8 8 5z" fill="#161616"/><path d="M0 4 4 .5 8 4" fill="none" stroke="#cbcbcb"/></svg>`;
  }).join('');
  return `<div class="t ${r.c || ''} ${r.mid ? 'mid' : ''}">${r.name || ''}${r.st ? `<svg width="14" height="12" viewBox="0 0 14 12" fill="none" stroke="currentColor"><path d="M0 10.500h14M2.500 9.500 3 8.500Q1 7.500 1 5.500 1 3 3.500 3T6 5.500Q6 7.500 4.500 8.500l.5 1M9 9.500l.5-1Q8 7.500 8 5.500 8 3 10.500 3T13 5.500q0 2-1.500 3l.5 1"/></svg>` : ''}</div><div class="body">${pattern(r.p, lead, bars, r.bright || 0)}</div>${notches}`;
});

const BARGRID = 'display: grid; grid-template-columns: 6px repeat(14, minmax(0, 1fr)); margin-right: -2px;';
define('arrange-view', `
  :host { display: block; position: relative; border: 2px solid #6f9fd2; border-width: 2px 0 0 2px; background: #282828; min-width: 0; overflow: hidden; box-sizing: border-box; }
  .ruler { ${BARGRID} height: 29px; background: #2b2b2b; border-bottom: 1px solid #1b1b1b; }
  .ruler div { border-left: 1px solid #606060; font-family: var(--ui); font-size: 11px; line-height: 13px; padding-left: 2px; color: #dedede;
    background: linear-gradient(#5a5a5a, #5a5a5a) 25% 100% / 1px 6px no-repeat, linear-gradient(#5a5a5a, #5a5a5a) 50% 100% / 1px 6px no-repeat, linear-gradient(#5a5a5a, #5a5a5a) 75% 100% / 1px 6px no-repeat; }
  .ruler div.half { border-left: 0; margin-top: 14px; box-shadow: inset 1px 0 0 #606060; }
  .lines { ${BARGRID} position: absolute; inset: 29px 0 0 0; }
  .lines div { border-left: 1px solid #373737; }
  .lanes { position: relative; display: grid; grid-template-rows: repeat(11, minmax(0, 1fr)); height: calc(var(--tracks) - 1px); }
  .lane { ${BARGRID} grid-template-rows: minmax(0, 1fr); border-bottom: 1px solid #202020; min-height: 0; }
  .sel { background: rgba(255,255,255,.04); }
  .over { ${BARGRID} position: absolute; inset: 0; pointer-events: none; }
  .head { grid-column: 13; margin: 14px 0 0 15px; width: 14px; background: linear-gradient(#dcdcdc, #dcdcdc) 7px 0 / 1px 100% no-repeat; }
`, () => `<div class="ruler"><span></span>${Array.from({ length: 14 }, (_, i) => i % 2 ? '<div class="half"></div>' : `<div>${25 + i}</div>`).join('')}</div>
  <div class="lines"><span></span>${'<div></div>'.repeat(14)}</div>
  <div class="lanes">${REGIONS.map((rs, i) => `<div class="lane ${i === 2 ? 'sel' : ''}">${rs.map((r, k) => `<region-clip lane="${i}" index="${k}" ${r.from === 24 ? 'open' : ''} style="grid-row:1;grid-column:${r.from === 24 ? 1 : r.from - 23}/${r.to - 23}"></region-clip>`).join('')}</div>`).join('')}</div>
  <div class="over"><div class="head"><svg width="14" height="14" viewBox="0 0 14 14"><path d="M.5 1.500q0-1 1-1h11q1 0 1 1V8L7.500 13.500h-1L.5 8z" fill="#a9a9a9"/><path d="M7.500 3v11" stroke="#f4f4f4"/></svg></div></div>`);

/* ---------- main area ---------- */
define('main-toolbar', `
  :host { display: flex; align-items: center; height: 30px; padding: 0 3px 0 7px; background: #3e3e3e; border-bottom: 1px solid #323232; box-sizing: border-box; color: #f0f0f0; overflow: hidden; }
  .z { display: flex; align-items: center; gap: 4px; height: 17px; padding: 0 4px; color: #a9a9a9; width: 61px; }
`, () => `<button-group style="--fg:#858585;opacity:.8;margin-right:8px">${ib('up', 27)}</button-group>
  <button-group style="margin-right:7px;--fg:#f0f0f0"><icon-button menu style="--w:48px">Edit</icon-button><icon-button menu style="--w:77px">Functions</icon-button><icon-button menu style="--w:53px">View</icon-button></button-group>
  <button-group tone="blue" style="margin-right:8px">${ib('gridi', 25)}${ib('bricks', 25)}</button-group>
  <button-group style="margin-right:7px">${ib('auto', 25)}${ib('flex', 26)}</button-group>
  <button-group tone="blue">${ib('catchp', 27)}</button-group>
  <span style="flex:277"></span>
  <button-group><icon-button menu icon="pointer" label="Pointer tool" style="--w:34px"></icon-button><icon-button menu icon="marquee" label="Marquee tool" style="--w:34px"></icon-button></button-group>
  <span style="flex:142"></span>
  <pop-up label="Snap:" value="Smart" style="--w:128px;margin-right:8px"></pop-up>
  <pop-up label="Drag:" value="No Overlap" style="--w:80px;margin-right:8px"></pop-up>
  <button-group style="margin-right:8px">${ib('wave', 24)}</button-group>
  <button-group style="margin-right:7px">${ib('vzoom', 25)}${ib('hzoom', 25)}</button-group>
  <button-group tone="dark"><div class="z">${ICONS.varrow}<level-slider value="42" label="Vertical zoom" style="--w:38px;--h:4px;--t:9px;--track:#252525"></level-slider></div><div class="z" style="border-left:1px solid #3e3e3e">${ICONS.harrow}<level-slider value="50" label="Horizontal zoom" style="--w:36px;--h:4px;--t:9px;--track:#252525"></level-slider></div></button-group>`);

define('daw-window', `
  :host { display: grid; grid-template-rows: 68px minmax(0, 1fr); height: 100vh; --tracks: 434px; }
  .body { display: grid; grid-template-columns: 181px minmax(0, 1fr); min-height: 0; }
  .right { display: grid; grid-template-rows: 30px minmax(0, 1fr); min-width: 0; min-height: 0; }
  .cols { display: grid; grid-template-columns: 261px 526px 21px minmax(0, 1fr); min-height: 0; }
`, () => `<daw-header></daw-header><div class="body"><inspector-panel></inspector-panel><div class="right"><main-toolbar></main-toolbar><div class="cols"><track-list></track-list><loop-grid></loop-grid><divider-column></divider-column><arrange-view></arrange-view></div></div></div>`);
</script>
</body>
</html>
